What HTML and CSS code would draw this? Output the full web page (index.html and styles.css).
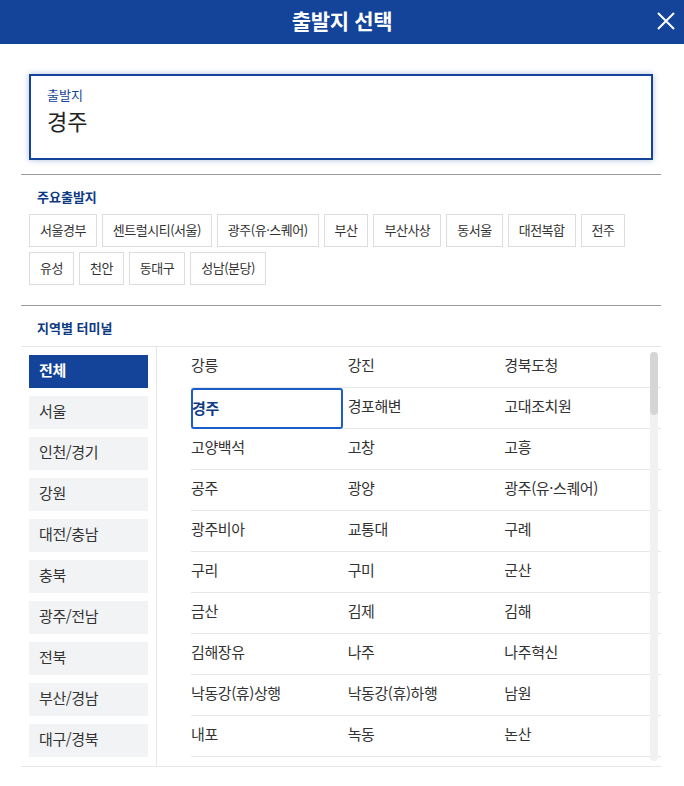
FILE: index.html
```html
<!DOCTYPE html>
<html lang="ko">
<head>
    <meta charset="UTF-8">
    <meta name="viewport" content="width=device-width, initial-scale=1.0">
    <title>출발지 선택</title>
    <link rel="stylesheet" href="styles.css">
</head>
<body>

    <div class="header">
        <span></span>
        <h1 class="header-title">출발지 선택</h1>
        <button class="close-btn" aria-label="닫기">
            <svg width="20" height="20" viewBox="0 0 20 20">
                <path d="M2 2 L18 18 M18 2 L2 18" stroke="#fff" stroke-width="2" fill="none"/>
            </svg>
        </button>
    </div>

    <div class="content">
        <div class="search-wrap">
            <div class="search-box">
                <div class="search-label">출발지</div>
                <div class="search-value">경주</div>
            </div>
        </div>

        <div class="section">
            <h2 class="section-title">주요출발지</h2>
            <div class="chips">
                <button class="chip">서울경부</button>
                <button class="chip">센트럴시티(서울)</button>
                <button class="chip">광주(유·스퀘어)</button>
                <button class="chip">부산</button>
                <button class="chip">부산사상</button>
                <button class="chip">동서울</button>
                <button class="chip">대전복합</button>
                <button class="chip">전주</button>
                <button class="chip">유성</button>
                <button class="chip">천안</button>
                <button class="chip">동대구</button>
                <button class="chip">성남(분당)</button>
            </div>
        </div>

        <div class="section section-terminal">
            <h2 class="section-title">지역별 터미널</h2>
            <div class="terminal-panel">
                <ul class="region-list">
                    <li class="region active">전체</li>
                    <li class="region">서울</li>
                    <li class="region">인천/경기</li>
                    <li class="region">강원</li>
                    <li class="region">대전/충남</li>
                    <li class="region">충북</li>
                    <li class="region">광주/전남</li>
                    <li class="region">전북</li>
                    <li class="region">부산/경남</li>
                    <li class="region">대구/경북</li>
                </ul>

                <div class="terminal-wrap">
                    <ul class="terminal-list">
                        <li><a>강릉</a></li>
                        <li><a>강진</a></li>
                        <li><a>경북도청</a></li>
                        <li><a class="selected">경주</a></li>
                        <li><a>경포해변</a></li>
                        <li><a>고대조치원</a></li>
                        <li><a>고양백석</a></li>
                        <li><a>고창</a></li>
                        <li><a>고흥</a></li>
                        <li><a>공주</a></li>
                        <li><a>광양</a></li>
                        <li><a>광주(유·스퀘어)</a></li>
                        <li><a>광주비아</a></li>
                        <li><a>교통대</a></li>
                        <li><a>구례</a></li>
                        <li><a>구리</a></li>
                        <li><a>구미</a></li>
                        <li><a>군산</a></li>
                        <li><a>금산</a></li>
                        <li><a>김제</a></li>
                        <li><a>김해</a></li>
                        <li><a>김해장유</a></li>
                        <li><a>나주</a></li>
                        <li><a>나주혁신</a></li>
                        <li><a>낙동강(휴)상행</a></li>
                        <li><a>낙동강(휴)하행</a></li>
                        <li><a>남원</a></li>
                        <li><a>내포</a></li>
                        <li><a>녹동</a></li>
                        <li><a>논산</a></li>
                    </ul>
                    <div class="scrollbar"><div class="scroll-thumb"></div></div>
                </div>
            </div>
        </div>
    </div>

</body>
</html>
```

FILE: styles.css
```css
:root {
    --primary: #13449a;
    --primary-dark: #0d3a82;
    --focus: #1a5ec8;
    --line: #e6e6e6;
    --divider: #9a9a9a;
    --region-bg: #f2f3f5;
    --text-dark: #333333;
}

* {
    box-sizing: border-box;
    margin: 0;
    padding: 0;
}

body {
    font-family: 'Noto Sans CJK KR', 'Noto Sans', sans-serif;
    background: #ffffff;
    color: var(--text-dark);
    width: 684px;
    height: 786px;
    overflow: hidden;
}

ul {
    list-style: none;
}

button {
    font-family: inherit;
    background: none;
    border: none;
    cursor: pointer;
}

/* header */
.header {
    height: 44px;
    background: var(--primary);
    display: grid;
    grid-template-columns: 1fr auto 1fr;
    align-items: center;
    padding: 0 8px 3px;
}

.header-title {
    color: #fff;
    font-size: 21px;
    font-weight: 700;
    line-height: 1;
    letter-spacing: -0.3px;
}

.close-btn {
    justify-self: end;
    width: 20px;
    height: 20px;
    display: flex;
}

/* content */
.content {
    padding: 0 23px 0 21px;
}

.search-wrap {
    padding: 30px 8px 14px;
}

.search-box {
    height: 86px;
    border: 2px solid var(--primary);
    box-shadow: 0 0 6px rgba(19, 68, 154, 0.35);
    padding: 10px 16px 0;
}

.search-label {
    font-size: 13px;
    line-height: 18px;
    margin-bottom: 2px;
    color: var(--primary);
}

.search-value {
    font-size: 22px;
    line-height: 28px;
    color: #222;
}

.section {
    border-top: 1px solid var(--divider);
    padding-bottom: 20px;
}

.section-title {
    font-size: 13px;
    font-weight: 700;
    color: var(--primary-dark);
    line-height: 20px;
    padding: 12px 16px 2px;
}

.chips {
    display: flex;
    flex-wrap: wrap;
    gap: 5px 5px;
    padding: 5px 8px 0;
}

.chip {
    height: 33px;
    padding: 0 10px 3px;
    border: 1px solid #dddddd;
    font-size: 13px;
    color: var(--text-dark);
    letter-spacing: -0.5px;
}

/* regional terminals */
.section-terminal {
    padding-bottom: 0;
}

.section-terminal .section-title {
    padding-bottom: 8px;
}

.terminal-panel {
    display: flex;
    height: 421px;
    border-top: 1px solid var(--line);
    border-bottom: 1px solid var(--line);
}

.region-list {
    width: 136px;
    border-right: 1px solid var(--line);
    padding: 8px 8px 0;
    display: flex;
    flex-direction: column;
    gap: 8px;
}

.region {
    height: 33px;
    line-height: 29px;
    padding-left: 10px;
    background: var(--region-bg);
    font-size: 15px;
    color: var(--text-dark);
    letter-spacing: -0.4px;
}

.region.active {
    background: var(--primary);
    color: #fff;
    font-weight: 700;
}

.terminal-wrap {
    position: relative;
    flex: 1;
    overflow: hidden;
    padding-left: 34px;
}

.terminal-list {
    display: grid;
    grid-template-columns: repeat(3, 1fr);
}

.terminal-list li {
    height: 41px;
    border-bottom: 1px solid var(--line);
}

.terminal-list a {
    display: block;
    height: 40px;
    line-height: 36px;
    margin-right: 5px;
    font-size: 15px;
    color: var(--text-dark);
    letter-spacing: -0.4px;
    cursor: pointer;
}

.terminal-list a.selected {
    height: 41px;
    border: 2px solid var(--focus);
    border-radius: 3px;
    line-height: 35px;
    color: var(--primary-dark);
    font-weight: 700;
    text-indent: -1px;
}

.scrollbar {
    position: absolute;
    top: 5px;
    bottom: 5px;
    right: 3px;
    width: 8px;
    border-radius: 4px;
    background: #f1f1f3;
}

.scroll-thumb {
    height: 63px;
    border-radius: 4px;
    background: #d5d5d5;
}
```
